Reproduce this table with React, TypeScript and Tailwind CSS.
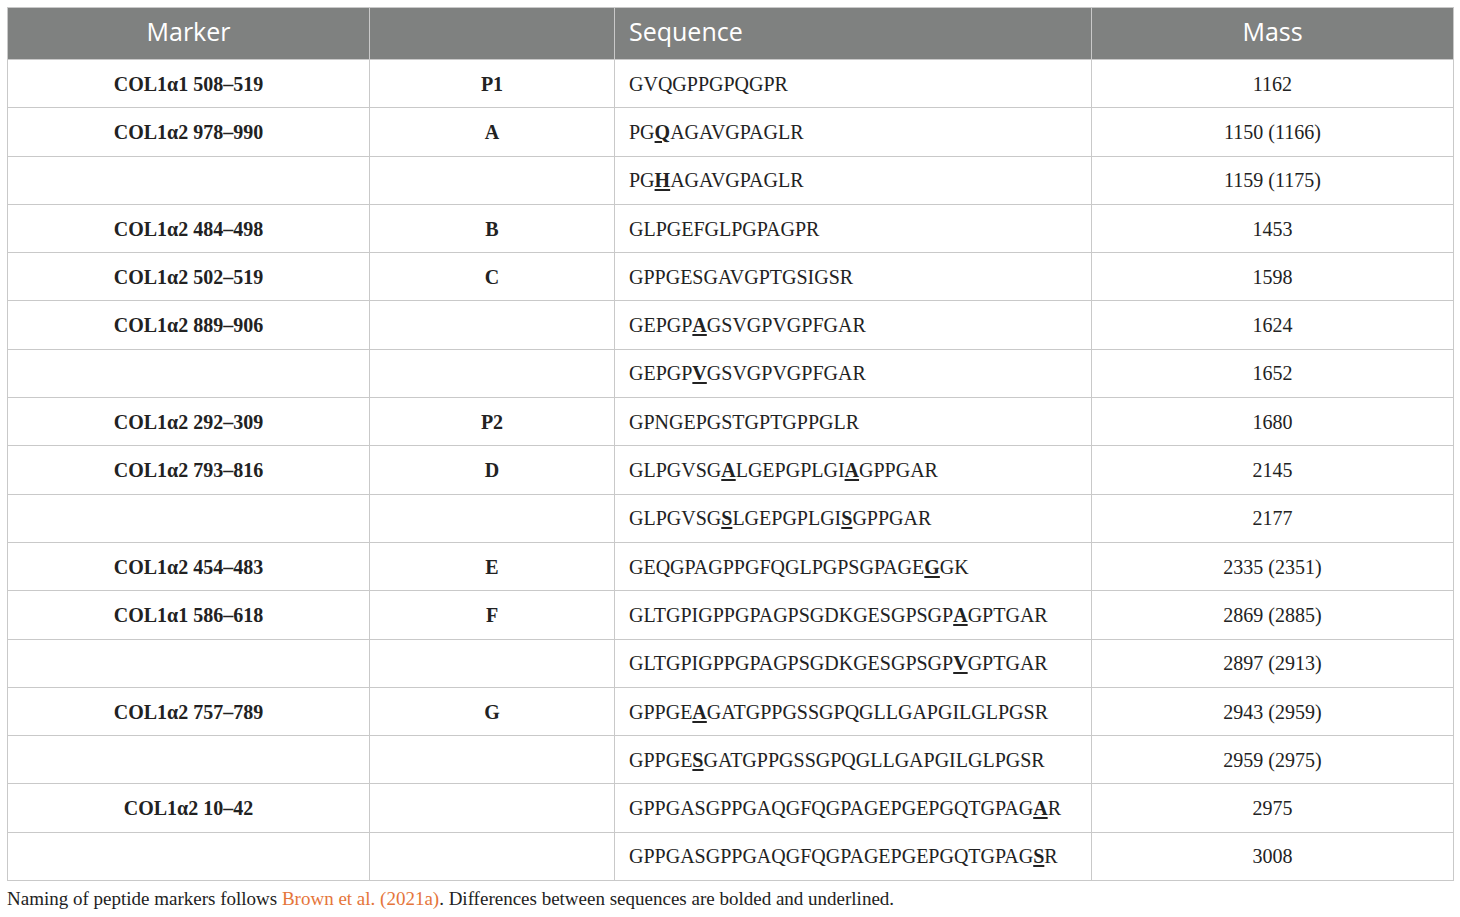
const rows: [string, string, string, string][] = [
  ["COL1α1 508–519", "P1", "GVQGPPGPQGPR", "1162"],
  ["COL1α2 978–990", "A", "PG[Q]AGAVGPAGLR", "1150 (1166)"],
  ["", "", "PG[H]AGAVGPAGLR", "1159 (1175)"],
  ["COL1α2 484–498", "B", "GLPGEFGLPGPAGPR", "1453"],
  ["COL1α2 502–519", "C", "GPPGESGAVGPTGSIGSR", "1598"],
  ["COL1α2 889–906", "", "GEPGP[A]GSVGPVGPFGAR", "1624"],
  ["", "", "GEPGP[V]GSVGPVGPFGAR", "1652"],
  ["COL1α2 292–309", "P2", "GPNGEPGSTGPTGPPGLR", "1680"],
  ["COL1α2 793–816", "D", "GLPGVSG[A]LGEPGPLGI[A]GPPGAR", "2145"],
  ["", "", "GLPGVSG[S]LGEPGPLGI[S]GPPGAR", "2177"],
  ["COL1α2 454–483", "E", "GEQGPAGPPGFQGLPGPSGPAGE[G]GK", "2335 (2351)"],
  ["COL1α1 586–618", "F", "GLTGPIGPPGPAGPSGDKGESGPSGP[A]GPTGAR", "2869 (2885)"],
  ["", "", "GLTGPIGPPGPAGPSGDKGESGPSGP[V]GPTGAR", "2897 (2913)"],
  ["COL1α2 757–789", "G", "GPPGE[A]GATGPPGSSGPQGLLGAPGILGLPGSR", "2943 (2959)"],
  ["", "", "GPPGE[S]GATGPPGSSGPQGLLGAPGILGLPGSR", "2959 (2975)"],
  ["COL1α2 10–42", "", "GPPGASGPPGAQGFQGPAGEPGEPGQTGPAG[A]R", "2975"],
  ["", "", "GPPGASGPPGAQGFQGPAGEPGEPGQTGPAG[S]R", "3008"],
];

function Seq({ text }: { text: string }) {
  const parts = text.split(/(\[[A-Z]\])/);
  return (
    <>
      {parts.map((p, i) =>
        p.startsWith("[") ? (
          <b key={i} className="font-bold underline underline-offset-2">
            {p.slice(1, -1)}
          </b>
        ) : (
          <span key={i}>{p}</span>
        ),
      )}
    </>
  );
}

export default function App() {
  return (
    <div className="min-h-screen bg-white pt-[7px] pl-[7px] font-['Liberation_Serif',serif] text-[#222]">
      <table className="w-[1446px] table-fixed border-collapse border border-[#c9c9c9]">
        <colgroup>
          <col className="w-[362px]" />
          <col className="w-[245px]" />
          <col className="w-[477px]" />
          <col className="w-[362px]" />
        </colgroup>
        <thead>
          <tr className="h-[52px] bg-[#7f8180] font-['Open_Sans',sans-serif] text-[25px] font-normal text-white">
            <th className="border border-[#c9c9c9] pb-[3px] text-center font-normal">Marker</th>
            <th className="border border-[#c9c9c9] font-normal"></th>
            <th className="border border-[#c9c9c9] pb-[3px] pl-[14px] text-left font-normal">Sequence</th>
            <th className="border border-[#c9c9c9] pb-[3px] text-center font-normal">Mass</th>
          </tr>
        </thead>
        <tbody className="text-[20px]">
          {rows.map((r, i) => (
            <tr key={i} className="h-[48.3px]">
              <td className="border border-[#c9c9c9] text-center font-bold">{r[0]}</td>
              <td className="border border-[#c9c9c9] text-center font-bold">{r[1]}</td>
              <td className="border border-[#c9c9c9] pl-[14px] text-left">
                <Seq text={r[2]} />
              </td>
              <td className="border border-[#c9c9c9] text-center">{r[3]}</td>
            </tr>
          ))}
        </tbody>
      </table>
      <p className="mt-[6px] text-[19px] leading-[24px] text-[#222]">
        Naming of peptide markers follows{" "}
        <a className="text-[#e5753a]">Brown et al. (2021a)</a>. Differences between
        sequences are bolded and underlined.
      </p>
    </div>
  );
}
